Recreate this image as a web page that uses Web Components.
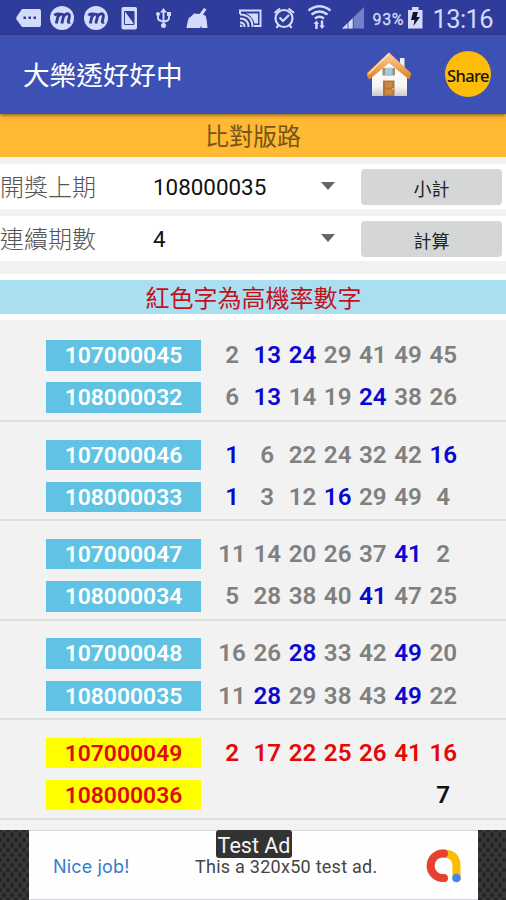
<!DOCTYPE html>
<html lang="zh-Hant">
<head>
<meta charset="utf-8">
<title>大樂透好好中</title>
<style>
html,body{margin:0;height:900px;overflow:hidden;background:#f2f2f2;font-family:Roboto,"Noto Sans CJK TC",sans-serif}
</style>
</head>
<body>
<lotto-app></lotto-app>
<script>
const define = (name, render) => customElements.define(name, class extends HTMLElement {
  connectedCallback() {
    if (this.shadowRoot) return;
    this.attachShadow({ mode: 'open' }).innerHTML = render(this);
  }
});

define('status-bar', () => `
<style>
:host{display:block;height:35px;background:#303c9c;color:#d3dafa}
svg{display:block}
text{font-family:Roboto,sans-serif;fill:#d3dafa}
</style>
<svg width="506" height="35" viewBox="0 0 506 35" fill="#d3dafa">
  <path d="M22 9H39Q41 9 41 11V25Q41 27 39 27H22L16.500 19.500Q16 18 16.500 17Z"/>
  <g fill="#303c9c"><rect x="23.500" y="16.500" width="2.500" height="2.500"/><rect x="28.500" y="16.500" width="2.500" height="2.500"/><rect x="33.500" y="16.500" width="2.500" height="2.500"/></g>
  <g id="m"><circle cx="62" cy="18" r="12"/><path d="M54.500 15.500Q56 13.500 58.500 14L56.300 23.500M58.200 16.500Q61.500 12.500 63.800 15.200L61.800 23.500M63.700 16.200Q67 12.500 69 14.500Q69.700 15.500 69.300 17L68.300 21.500Q68.300 23 70 22" fill="none" stroke="#303c9c" stroke-width="2.900"/></g>
  <use href="#m" x="34"/>
  <rect x="121.500" y="7" width="15.500" height="22.500" rx="2"/><path d="M124.500 11.500H134V24.500H124.500Z" fill="none" stroke="#303c9c" stroke-width="1"/><path d="M125 11.500H134V24Z" fill="#303c9c"/>
  <g fill="none" stroke="#d3dafa" stroke-width="1.900"><path d="M163.500 10V25M158 14V18Q158 20 160 20.500L163.500 22L167.500 20.500Q169 20 169 18V14"/></g>
  <path d="M163.500 8L167 12.500H160Z"/><circle cx="158" cy="14" r="2"/><rect x="167" y="12" width="4" height="4"/><circle cx="163.500" cy="25.500" r="2.500"/>
  <path d="M204 8L206.500 9.500L203 14.500L206 16V19L189.500 18L194 13.500L199.500 14ZM189 17.500L206.500 18.500L207.500 28H202L200.500 25.500V28H186.500Q187.500 21 189 17.500Z"/>
  <g fill="none" stroke="#d3dafa" stroke-width="2"><path d="M240 14V10.500H260.500V26H254M240 18.500Q248.500 18.500 248.500 27M240 14.500Q252.500 15 252.500 27"/><path d="M240 22.500Q244.500 22.500 244.500 27"/></g><path d="M246 13.500H258V23.500H254.500Q252.500 16 246 13.500Z"/><path d="M240 24.500Q242.500 24.500 242.500 27H240Z"/>
  <g fill="none" stroke="#d3dafa" stroke-width="2.200"><circle cx="284" cy="18.500" r="8.500"/><path d="M274.500 13L280 8.500M288.500 8.500L294 13M278.500 25L276.500 28M289.500 25L291.500 28M279.500 17.500L283 21L289 15"/></g>
  <g fill="none" stroke="#d3dafa" stroke-width="2.300"><path d="M308.500 10.500Q319.500 2 330.500 10.500M311.500 14.500Q319.500 8.500 327.500 14.500M315 18.500Q319.500 15 324 18.500"/></g>
  <path d="M316.500 20.500L319 24H317.700V29H315.200V24H313.500ZM322 29L319.500 25.500H320.800V20.500H323.200V25.500H325Z"/>
  <path d="M342 28.500L364 7V28.500Z" fill="#7480c6"/><path d="M342 28.500L353 18V28.500Z"/><path d="M348 20V29M353.200 18V29" stroke="#303c9c" stroke-width=".8"/>
  <text x="372.500" y="25" font-size="16" textLength="31" stroke="#d3dafa" stroke-width=".3">93%</text>
  <path d="M408 10H412V7H418.500V10H422.500V28.500H408Z"/><path d="M413 12H418L416.500 17H420L413.500 26L414.500 20H411Z" fill="#10122c"/>
  <text x="432.500" y="28.300" font-size="25.500" textLength="61">13:16</text>
</svg>`);

define('app-bar', () => `
<style>
:host{display:flex;align-items:center;box-sizing:border-box;height:79px;padding:0 15px 1px 23px;background:#3d50b3;color:#fff;box-shadow:0 1px 4px #0008;z-index:1}
h1{flex:1;margin:0;padding-top:4px;font-size:26.600px;font-weight:400;line-height:36px}
.house{width:46px;height:46px;margin-right:33px}
.share{width:46px;height:46px;border-radius:50%;background:#fdbc08;color:#17130a;font:500 16.500px/49px "Noto Sans",sans-serif;text-align:center;letter-spacing:-.6px}
</style>
<h1>大樂透好好中</h1>
<svg class="house" viewBox="0 0 46 46">
  <defs><linearGradient id="w" x2="0" y2="1"><stop offset="0" stop-color="#fff"/><stop offset=".75" stop-color="#f8f6f3"/><stop offset="1" stop-color="#c9c8cc"/></linearGradient><linearGradient id="r" x2="0" y2="1"><stop offset="0" stop-color="#ffd49a"/><stop offset="1" stop-color="#e07d24"/></linearGradient></defs>
  <path d="M34 7H38.500V19H34Z" fill="#eef0fa"/>
  <path d="M6 24L23 7L41 24V45H6Z" fill="url(#w)"/>
  <path d="M23 1.500L45 22Q45.500 25 43 28.500L23 12L3.500 28.500Q.5 26 1 22Z" fill="url(#r)"/>
  <path d="M23 2.500L2.500 23" stroke="#ffe0b0" stroke-width="1.300"/>
  <path d="M16.500 17H29V24.500H16.500Z" fill="#a98a6b"/><path d="M19 17H26.500V24H19Z" fill="#9ccbe4"/><path d="M18.500 16.500H27" stroke="#f2eadf"/>
  <path d="M17 29.500H28.500V45H17Z" fill="#b77434"/><path d="M19 31.500H26.500V36.500H19ZM19 38.500H26.500V43.500H19Z" fill="#c88a48"/><circle cx="27" cy="38" r=".8" fill="#ffe4a0"/>
</svg>
<div class="share">Share</div>`);

define('section-title', () => `
<style>
:host{display:block;box-sizing:border-box;text-align:center;font-size:24px}
:host([kind=main]){height:43px;background:#ffb932;color:#76541b;line-height:46px}
:host([kind=hint]){height:46px;border:solid #fff;border-width:6px 0;background:#aadff1;color:#c4101b;line-height:38px;padding-left:1px;margin-top:13px}
</style><slot></slot>`);

define('filter-row', el => `
<style>
:host{display:grid;grid-template-columns:153px 168px 30px 141px;align-items:center;height:45px;background:#fff;color:#111;margin-top:7px}
.label{font-size:24px;color:#555;font-weight:300;white-space:nowrap;margin-top:-2px}
.value{font-size:22.400px}
.arrow{width:14px;height:8px;margin-top:-2px}
button{width:141px;height:36px;margin:0 0 0 10px;padding:5px 0 0;border:0;border-radius:4px;background:#d5d7d6;color:#222;font:400 18px/31px Roboto,"Noto Sans CJK TC",sans-serif}
</style>
<span class="label"><slot></slot></span><span class="value">${el.getAttribute('value')}</span>
<svg class="arrow" viewBox="0 0 14 8"><path d="M0 0H14L7 8Z" fill="#666"/></svg>
<button>${el.getAttribute('action')}</button>`);

define('draw-row', el => `
<style>
:host{display:flex;height:30.400px;padding-left:46px}
.id{width:155px;line-height:32px;background:#61c3e4;color:#fff;font-size:22.900px;font-weight:600;text-align:center}
:host([next]) .id{background:#ff0;color:#e00b12}
.nums{display:grid;grid-template-columns:repeat(7,35.200px);margin-left:13.500px;color:#808080;font-weight:600;font-size:24.200px;line-height:31px;text-align:center}
.b{color:#0a08d0}.r{color:#e50808}.k{color:#111}
</style>
<div class="id">${el.getAttribute('no')}</div>
<div class="nums">${el.getAttribute('nums').split(',').map(n => `<span class="${n.replace(/\d/g, '')}">${n.replace(/\D/g, '')}</span>`).join('')}</div>`);

define('draw-group', () => `
<style>:host{display:flex;flex-direction:column;gap:11.800px;box-sizing:border-box;height:99.400px;padding-top:17.500px;border-bottom:2px solid #dedede}</style><slot></slot>`);

define('ad-banner', () => `
<style>
:host{display:flex;justify-content:center;height:70px;margin-top:10.200px;background-color:#383838;background-image:radial-gradient(#262626 1.600px,transparent 2.400px),radial-gradient(#262626 1.600px,transparent 2.400px);background-size:8px 10px;background-position:0 0,4px 5px}
.ad{position:relative;box-sizing:border-box;width:449px;margin-left:1px;background:#fefefe;border:solid #d5d7da;border-width:1px 0;color:#454545;display:flex;align-items:center;padding:3px 14px 0 24px;font-size:18px}
.job{width:142px;color:#377bd0;font-family:Inter,sans-serif;letter-spacing:.15px}
.copy{flex:1;white-space:nowrap;letter-spacing:.26px}
svg{width:40px;height:40px}
.tag{position:absolute;left:187px;top:-1px;width:76px;height:28px;border-radius:3px;background:#333;color:#f4f4f4;font-size:21.500px;line-height:31px;text-align:center}
</style>
<div class="ad"><span class="job"><slot name="job"></slot></span><span class="copy"><slot></slot></span>
<svg viewBox="0 0 40 40" fill="none" stroke-width="8" stroke-linecap="round"><path d="M20 7.500Q32.500 8 32.500 20V32" stroke="#fbbc04"/><path d="M20 7.500A12.300 12.300 0 1 0 20 32" stroke="#e6402f"/><circle cx="32.500" cy="32" r="4.300" fill="#4285f4"/></svg>
<span class="tag"><slot name="tag"></slot></span></div>`);

define('lotto-app', () => `
<style>:host{display:flex;flex-direction:column;width:506px;height:900px;background:#f2f2f2}:host>*{flex-shrink:0}draw-group:first-of-type{margin-top:2.700px}</style>
<status-bar></status-bar><app-bar></app-bar>
<section-title kind="main">比對版路</section-title>
<filter-row value="108000035" action="小計">開獎上期</filter-row>
<filter-row value="4" action="計算">連續期數</filter-row>
<section-title kind="hint">紅色字為高機率數字</section-title>
<draw-group><draw-row no="107000045" nums="2,13b,24b,29,41,49,45"></draw-row><draw-row no="108000032" nums="6,13b,14,19,24b,38,26"></draw-row></draw-group>
<draw-group><draw-row no="107000046" nums="1b,6,22,24,32,42,16b"></draw-row><draw-row no="108000033" nums="1b,3,12,16b,29,49,4"></draw-row></draw-group>
<draw-group><draw-row no="107000047" nums="11,14,20,26,37,41b,2"></draw-row><draw-row no="108000034" nums="5,28,38,40,41b,47,25"></draw-row></draw-group>
<draw-group><draw-row no="107000048" nums="16,26,28b,33,42,49b,20"></draw-row><draw-row no="108000035" nums="11,28b,29,38,43,49b,22"></draw-row></draw-group>
<draw-group><draw-row next no="107000049" nums="2r,17r,22r,25r,26r,41r,16r"></draw-row><draw-row next no="108000036" nums=",,,,,,7k"></draw-row></draw-group>
<ad-banner><span slot="job">Nice job!</span>This a 320x50 test ad.<span slot="tag">Test Ad</span></ad-banner>`);
</script>
</body>
</html>
